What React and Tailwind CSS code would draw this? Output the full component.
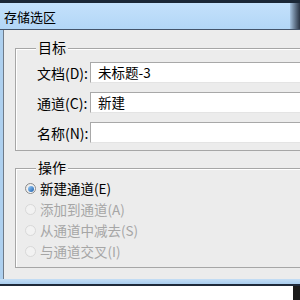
import React from "react";

function Radio({ checked, disabled, label }) {
  return (
    <div className="flex items-center h-[21px]">
      <span
        className={
          "ml-[9px] w-[11px] h-[11px] rounded-full border flex items-center justify-center " +
          (disabled
            ? "border-[#d8d8d8] bg-[#f2f2f2]"
            : "border-[#8a8a8a] bg-gradient-to-br from-[#e6e6e6] to-[#ffffff]")
        }
      >
        {checked && (
          <span className="w-[6px] h-[6px] rounded-full bg-gradient-to-br from-[#9ad0ff] to-[#1c5fa8]" />
        )}
      </span>
      <span className={"ml-[4px] text-[13.5px] " + (disabled ? "text-[#a6a6a6]" : "text-black")}>{label}</span>
    </div>
  );
}

function Field({ label, value }) {
  return (
    <div className="flex items-center h-[21px]">
      <span className="w-[53px] ml-[21px] text-black whitespace-nowrap">{label}</span>
      <div className="flex-1 h-[21px] border border-[#a8a8a8] border-b-[#e4e4e4] border-r-0 bg-white flex items-center pl-[7px] text-[13.5px] text-black">
        {value}
      </div>
    </div>
  );
}

export default function App() {
  return (
    <div
      className="w-[300px] h-[300px] overflow-hidden bg-white flex flex-col text-[14px] leading-none"
      style={{ fontFamily: '"Noto Sans CJK SC", "Noto Sans", sans-serif' }}
    >
      <div className="h-[3px] bg-[#1b2736] shrink-0" />
      <div className="h-[27px] shrink-0 flex bg-gradient-to-b from-[#c4e1fb] to-[#b2d6f6] border-b border-[#44546a]">
        <div className="flex-1 flex items-center pl-[4px] text-[13px] text-black">存储选区</div>
        <div className="w-[10px] bg-gradient-to-r from-[#a6c3e0] to-[#2a3444]" />
      </div>
      <div className="h-[249px] shrink-0 flex">
        <div className="w-[3px] bg-[#aed0ef]" />
        <div className="w-px bg-[#6e7a88]" />
        <div className="flex-1 bg-[#ececec] flex flex-col pl-[11px] pt-[18px]">
          <div className="relative border border-r-0 border-[#a6a6a6] shadow-[inset_1px_1px_0_#ffffff] pt-[13px] pb-[7px] flex flex-col gap-[9px]">
            <span className="absolute left-[20px] top-[-9px] bg-[#ececec] px-[2px] text-black">目标</span>
            <Field label="文档(D):" value="未标题-3" />
            <Field label="通道(C):" value="新建" />
            <Field label="名称(N):" value="" />
          </div>
          <div className="relative mt-[17px] border border-r-0 border-[#a6a6a6] shadow-[inset_1px_1px_0_#ffffff] pt-[9px] pb-[5px] flex flex-col">
            <span className="absolute left-[20px] top-[-9px] bg-[#ececec] px-[2px] text-black">操作</span>
            <Radio checked label="新建通道(E)" />
            <Radio disabled label="添加到通道(A)" />
            <Radio disabled label="从通道中减去(S)" />
            <Radio disabled label="与通道交叉(I)" />
          </div>
        </div>
      </div>
      <div className="h-[5px] shrink-0 bg-gradient-to-b from-[#c5def5] to-[#a9cdee]" />
      <div className="h-[2px] shrink-0 bg-[#1f2a3a]" />
      <div className="flex-1 flex">
        <div className="flex-1 bg-white" />
        <div className="w-[7px] bg-[#1b1b1b]" />
      </div>
    </div>
  );
}
